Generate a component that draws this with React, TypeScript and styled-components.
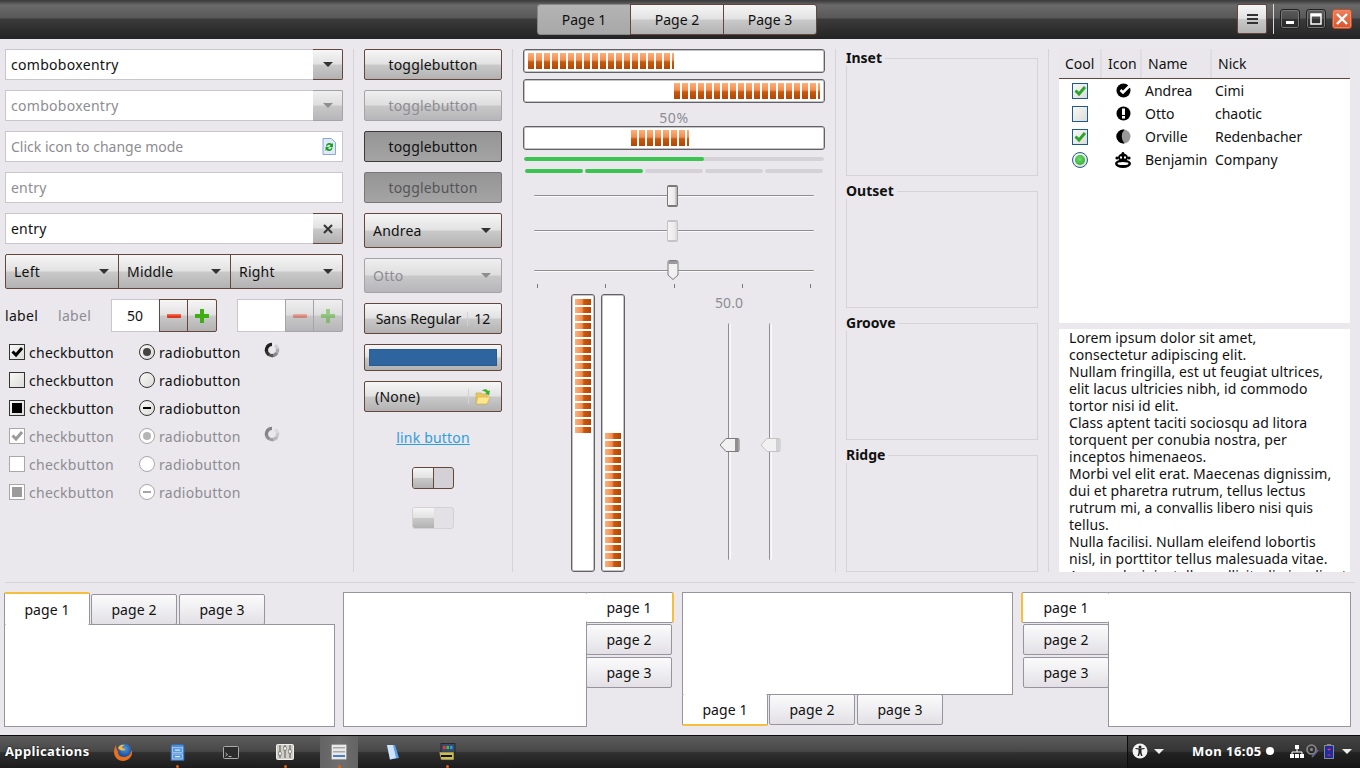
import React from "react";
import styled, { createGlobalStyle, css } from "styled-components";

const GlobalStyle = createGlobalStyle`
  html, body {
    margin: 0;
    padding: 0;
    width: 1360px;
    height: 768px;
    overflow: hidden;
    background: #eae8ed;
    font-family: "Noto Sans", "Open Sans", sans-serif;
    font-size: 14px;
    color: #111;
  }
  * { box-sizing: border-box; }
`;

const buttonFace = css`
  background: linear-gradient(#f6f6f6 0%, #e2e2e2 48%, #c9c9c9 52%, #b2b2b2 100%);
`;
const disabledFace = css`
  background: linear-gradient(#efeff0 0%, #dededf 48%, #c8c8c9 52%, #b6b6b8 100%);
`;
const BROWN = "#66453a";
const MUTED = "#8e8c92";

const Root = styled.div`
  width: 1360px;
  height: 768px;
  display: flex;
  flex-direction: column;
`;

/* title bar */
const TitleBar = styled.header`
  height: 39px;
  flex: none;
  display: flex;
  align-items: flex-start;
  position: relative;
  padding-top: 4px;
  background: linear-gradient(#3a3a3a 0, #4a4a4a 2px, #6a6a6a 5px, #585858 18px, #3b3b3b 19px, #232323 100%);
`;
const Stack = styled.div`
  display: flex;
  margin-left: 537px;
  width: 280px;
  height: 31px;
`;
const StackButton = styled.div<{ $on?: boolean }>`
  flex: 1;
  display: flex;
  align-items: center;
  justify-content: center;
  border: 1px solid ${BROWN};
  margin-left: -1px;
  ${buttonFace}
  &:first-child { margin-left: 0; border-radius: 3px 0 0 3px; }
  &:last-child { border-radius: 0 3px 3px 0; }
  ${(p) => p.$on && css`background: linear-gradient(#b4b4b4, #a8a8a8); border-color: #888;`}
`;
const MenuButton = styled.div`
  margin-left: 420px;
  width: 30px;
  height: 30px;
  border: 1px solid ${BROWN};
  border-radius: 2px;
  display: flex;
  align-items: center;
  justify-content: center;
  ${buttonFace}
`;
const TitleSep = styled.div`
  width: 1px;
  height: 30px;
  margin: 0 6px 0 6px;
  background: #d8d8d8;
`;
const WinButton = styled.div<{ $close?: boolean }>`
  width: 20px;
  height: 20px;
  margin: 5px 6px 0 0;
  border-radius: 3px;
  border: 1px solid ${(p) => (p.$close ? "#b5512f" : "#222")};
  box-shadow: inset 0 0 0 1px ${(p) => (p.$close ? "#e98a68" : "#777")};
  background: ${(p) =>
    p.$close
      ? "linear-gradient(#f0805a, #d9532c)"
      : "linear-gradient(#5c5c5c, #4a4a4a 50%, #333 52%, #2a2a2a)"};
  display: flex;
  align-items: center;
  justify-content: center;
`;

/* main area */
const Main = styled.main`
  flex: none;
  height: 543px;
  padding: 10px 10px 0 5px;
  display: flex;
`;
const Sep = styled.div`
  width: 1px;
  margin: 0 10px;
  height: 523px;
  background: #d5d3d8;
`;
const Col = styled.div<{ $w: number }>`
  width: ${(p) => p.$w}px;
  flex: none;
  display: flex;
  flex-direction: column;
`;

const EntryBox = styled.div<{ $off?: boolean; $mt?: number }>`
  height: 31px;
  flex: none;
  margin-top: ${(p) => p.$mt ?? 10}px;
  display: flex;
  align-items: stretch;
  background: #fff;
  border: 1px solid #c9c7cd;
  color: ${(p) => (p.$off ? MUTED : "#111")};
  position: relative;
`;
const EntryText = styled.div<{ $ls?: number }>`
  flex: 1;
  padding-left: 5px;
  line-height: 30px;
  letter-spacing: ${(p) => p.$ls ?? 0}px;
`;
const EntryBtn = styled.div<{ $off?: boolean }>`
  width: 30px;
  margin: -1px -1px -1px 0;
  display: flex;
  align-items: center;
  justify-content: center;
  border: 1px solid ${(p) => (p.$off ? "#a5a3aa" : BROWN)};
  border-left: none;
  border-radius: 0 2px 2px 0;
  ${(p) => (p.$off ? disabledFace : buttonFace)}
`;
const EntryIcon = styled.div`
  display: flex;
  align-items: center;
  padding-right: 6px;
`;
const Arrow = styled.span<{ $off?: boolean }>`
  display: inline-block;
  width: 0;
  height: 0;
  border-left: 5px solid transparent;
  border-right: 5px solid transparent;
  border-top: 5px solid ${(p) => (p.$off ? "#8e8e8e" : "#333")};
`;
const Linked = styled.div`
  height: 35px;
  margin-top: 10px;
  flex: none;
  display: flex;
  border: 1px solid ${BROWN};
  border-radius: 2px;
  ${buttonFace}
`;
const LinkedItem = styled.div`
  width: 112px;
  flex: none;
  display: flex;
  align-items: center;
  justify-content: space-between;
  padding: 0 9px 0 8px;
  letter-spacing: 0.2px;
  border-left: 1px solid ${BROWN};
  &:first-child { border-left: none; }
`;
const SpinRow = styled.div`
  margin-top: 10px;
  height: 33px;
  flex: none;
  display: flex;
  align-items: stretch;
`;
const Lbl = styled.div<{ $off?: boolean; $w: number }>`
  width: ${(p) => p.$w}px;
  line-height: 33px;
  letter-spacing: 0.3px;
  color: ${(p) => (p.$off ? MUTED : "#111")};
`;
const Spin = styled.div<{ $ml?: number }>`
  width: 106px;
  margin-left: ${(p) => p.$ml ?? 0}px;
  display: flex;
`;
const SpinEntry = styled.div`
  flex: 1;
  background: #fff;
  border: 1px solid #c9c7cd;
  border-right: none;
  text-align: center;
  line-height: 31px;
  padding-right: 2px;
`;
const SpinBtn = styled.div<{ $off?: boolean; $w: number }>`
  width: ${(p) => p.$w}px;
  display: flex;
  align-items: center;
  justify-content: center;
  border: 1px solid ${(p) => (p.$off ? "#a5a3aa" : BROWN)};
  margin-left: -1px;
  &:last-child { border-radius: 0 2px 2px 0; }
  ${(p) => (p.$off ? disabledFace : buttonFace)}
`;
const ChecksGrid = styled.div`
  margin-top: 6px;
  padding-left: 4px;
  display: grid;
  grid-template-columns: 130px 125px 1fr;
  grid-auto-rows: 28px;
  align-items: center;
`;
const CheckItem = styled.div<{ $off?: boolean }>`
  display: flex;
  align-items: center;
  gap: 4px;
  letter-spacing: 0.28px;
  color: ${(p) => (p.$off ? MUTED : "#111")};
`;
const Box = styled.span<{ $off?: boolean }>`
  width: 16px;
  height: 16px;
  flex: none;
  border: 1px solid ${(p) => (p.$off ? "#a9a7ac" : "#333")};
  background: ${(p) => (p.$off ? "#fff" : "linear-gradient(135deg, #f8f8f6, #dcdcd8)")};
  display: flex;
  align-items: center;
  justify-content: center;
`;
const Radio = styled(Box)`
  border-radius: 50%;
`;
const BoxFill = styled.span<{ $off?: boolean }>`
  width: 10px;
  height: 10px;
  background: ${(p) => (p.$off ? "#9b9b9b" : "#000")};
`;
const RadioDot = styled.span<{ $off?: boolean }>`
  width: 8px;
  height: 8px;
  border-radius: 50%;
  background: ${(p) => (p.$off ? "#b5b5b5" : "#444")};
`;
const RadioDash = styled.span<{ $off?: boolean }>`
  width: 8px;
  height: 2px;
  background: ${(p) => (p.$off ? "#a5a5a5" : "#000")};
`;

/* second column */
const Btn = styled.div<{ $h?: number; $mt?: number; $off?: boolean; $dark?: boolean; $sb?: boolean }>`
  height: ${(p) => p.$h ?? 31}px;
  margin-top: ${(p) => p.$mt ?? 10}px;
  flex: none;
  display: flex;
  align-items: center;
  justify-content: ${(p) => (p.$sb ? "space-between" : "center")};
  padding: ${(p) => (p.$sb ? "0 10px 0 8px" : "0")};
  border: 1px solid ${(p) => (p.$off ? "#a5a3aa" : BROWN)};
  border-radius: 2px;
  letter-spacing: 0.2px;
  color: ${(p) => (p.$off ? MUTED : "#111")};
  ${(p) => (p.$off ? disabledFace : buttonFace)}
  ${(p) =>
    p.$dark &&
    css`
      background: linear-gradient(#959595, #a4a4a4);
      border-color: ${p.$off ? "#77767a" : "#3c3c3c"};
      color: ${p.$off ? "#555" : "#111"};
    `}
`;
const FontName = styled.span`
  letter-spacing: 0;
`;
const FontSize = styled.span`
  margin-left: 6px;
  padding-left: 6px;
  border-left: 1px solid #d2d2d2;
  letter-spacing: 0;
  line-height: 14px;
`;
const ColorFill = styled.div`
  width: 100%;
  height: 17px;
  margin: 0 4px;
  background: #2f659f;
  border: 1px solid #2a5a8e;
`;
const FileLabel = styled.span`
  flex: 1;
  padding-left: 2px;
`;
const FileDivider = styled.span`
  height: 15px;
  width: 1px;
  margin-right: 6px;
  background: #d2d2d2;
`;
const LinkBtn = styled.div`
  margin-top: 16px;
  text-align: center;
  color: #2f9ddb;
  text-decoration: underline;
  line-height: 19px;
  letter-spacing: 0.2px;
`;
const SwitchBox = styled.div<{ $off?: boolean; $mt: number }>`
  width: 42px;
  height: 22px;
  margin: ${(p) => p.$mt}px auto 0;
  display: flex;
  border: 1px solid ${(p) => (p.$off ? "#d3d1d6" : BROWN)};
  border-radius: 3px;
  background: ${(p) => (p.$off ? "#e3e1e6" : "#d3d1d6")};
  overflow: hidden;
`;
const SwitchKnob = styled.div<{ $off?: boolean }>`
  width: 21px;
  border-right: 1px solid ${(p) => (p.$off ? "transparent" : BROWN)};
  ${buttonFace}
`;

/* third column */
const ProgressBar = styled.div<{ $mt?: number }>`
  height: 24px;
  flex: none;
  margin-top: ${(p) => p.$mt ?? 6}px;
  padding: 3px;
  border: 1px solid #626165;
  border-radius: 3px;
  background: #fff;
  box-shadow: inset 0 0 0 1px #c4c3c6;
`;
const ProgressFill = styled.div<{ $left: number; $w: number }>`
  height: 16px;
  margin-left: ${(p) => p.$left}px;
  width: ${(p) => p.$w}px;
  background: repeating-linear-gradient(90deg, transparent 0 6px, #fff 6px 8px),
    linear-gradient(#ffb07a 0%, #f08c4e 45%, #c9590f 55%, #b24803 100%);
`;
const Pct = styled.div`
  height: 23px;
  flex: none;
  text-align: center;
  line-height: 30px;
  letter-spacing: 0.6px;
  color: ${MUTED};
`;
const GreenTrough = styled.div`
  margin: 7px 1px 0;
  height: 4px;
  flex: none;
  background: #d4d2d7;
  border-radius: 2px;
  overflow: hidden;
`;
const GreenFill = styled.div<{ $w: number }>`
  height: 4px;
  width: ${(p) => p.$w}px;
  background: #3cc451;
  border-radius: 2px;
`;
const Level = styled.div`
  margin: 8px 2px 0;
  flex: none;
  display: flex;
  gap: 2px;
`;
const LevelSeg = styled.div<{ $on?: boolean }>`
  flex: 1;
  height: 4px;
  border-radius: 2px;
  background: ${(p) => (p.$on ? "#3cc451" : "#d4d2d7")};
`;
const HSlider = styled.div<{ $mt: number }>`
  position: relative;
  width: 280px;
  height: 22px;
  margin: ${(p) => p.$mt}px 0 0 11px;
  flex: none;
`;
const HTrack = styled.div`
  position: absolute;
  left: 0;
  right: 0;
  top: 10px;
  height: 2px;
  border-top: 1px solid #8e8d90;
  border-bottom: 1px solid #fafafa;
  border-radius: 2px;
`;
const Handle = styled.div<{ $off?: boolean }>`
  position: absolute;
  left: 133px;
  top: 0;
  width: 11px;
  height: 22px;
  border: 1px solid ${(p) => (p.$off ? "#c4c3c6" : "#7a797c")};
  border-top-width: 2px;
  border-bottom-width: 2px;
  border-radius: 2px;
  background: linear-gradient(90deg, #f4f4f4, #ececec 70%, ${(p) => (p.$off ? "#d8d8d8" : "#aaa")});
`;
const HandleSvg = styled.svg<{ $l: number; $t: number }>`
  position: absolute;
  left: ${(p) => p.$l}px;
  top: ${(p) => p.$t}px;
`;
const Ticks = styled.div`
  margin: 2px 0 0 14px;
  width: 274px;
  height: 4px;
  flex: none;
  display: flex;
  justify-content: space-between;
`;
const Tick = styled.span`
  width: 1px;
  height: 4px;
  background: #77767a;
`;
const VArea = styled.div`
  margin-top: 6px;
  flex: none;
  height: 278px;
  display: flex;
  padding-left: 48px;
`;
const VBar = styled.div<{ $ml?: number; $top: number }>`
  width: 24px;
  margin-left: ${(p) => p.$ml ?? 0}px;
  padding: ${(p) => p.$top}px 3px 0 3px;
  border: 1px solid #626165;
  border-radius: 3px;
  background: #fff;
  box-shadow: inset 0 0 0 1px #c4c3c6;
`;
const VFill = styled.div`
  height: 134px;
  width: 16px;
  background: repeating-linear-gradient(180deg, transparent 0 6px, #fff 6px 8px),
    linear-gradient(90deg, #ffb07a 0%, #f08c4e 45%, #c9590f 55%, #b24803 100%);
`;
const VCol = styled.div<{ $ml: number; $pt?: number }>`
  width: 40px;
  margin-left: ${(p) => p.$ml}px;
  padding-top: ${(p) => p.$pt ?? 0}px;
  display: flex;
  flex-direction: column;
  align-items: center;
`;
const VValue = styled.div`
  height: 29px;
  line-height: 18px;
  color: ${MUTED};
`;
const VTrack = styled.div`
  position: relative;
  width: 3px;
  height: 237px;
  border-left: 1px solid #8e8d90;
  border-right: 1px solid #fafafa;
  background: #f2f1f3;
  border-radius: 2px;
`;

/* frames */
const Frame = styled.div<{ $h: number; $mt: number }>`
  position: relative;
  height: ${(p) => p.$h}px;
  margin-top: ${(p) => p.$mt}px;
  border: 1px solid #d5d3d8;
  flex: none;
`;
const FrameLabel = styled.span`
  position: absolute;
  left: -1px;
  top: -10px;
  padding-right: 3px;
  line-height: 17px;
  font-weight: 700;
  background: #eae8ed;
`;

/* tree */
const Tree = styled.div`
  height: 274px;
  flex: none;
  background: #fff;
`;
const TreeHead = styled.div`
  height: 30px;
  display: flex;
  background: #e9e7ec;
  border-bottom: 1px solid ${BROWN};
`;
const TreeHeadCell = styled.div<{ $w: number }>`
  width: ${(p) => p.$w}px;
  flex: none;
  padding-left: 6px;
  line-height: 30px;
  border-right: 2px solid #dfdde2;
  &:last-child { flex: 1; border-right: none; }
`;
const TreeRow = styled.div`
  height: 23px;
  display: flex;
  align-items: center;
`;
const CellCenter = styled.div<{ $w: number }>`
  width: ${(p) => p.$w}px;
  flex: none;
  display: flex;
  justify-content: center;
`;
const CellText = styled.div<{ $w: number }>`
  width: ${(p) => p.$w}px;
  flex: none;
  white-space: nowrap;
`;
const TreeCheck = styled.span<{ $radio?: boolean }>`
  width: 16px;
  height: 16px;
  border: 1px solid #1f5a8c;
  border-radius: ${(p) => (p.$radio ? "50%" : "0")};
  background: linear-gradient(135deg, #f8f8f6, #dcdcd8);
  display: flex;
  align-items: center;
  justify-content: center;
`;
const TreeDot = styled.span`
  width: 10px;
  height: 10px;
  border-radius: 50%;
  background: radial-gradient(circle at 45% 40%, #6fdc6a, #23a02a);
`;
const TextView = styled.div`
  margin-top: 6px;
  height: 243px;
  flex: none;
  overflow: hidden;
  padding-left: 10px;
  background: #fff;
  line-height: 17px;
  letter-spacing: 0.07px;
`;
const TextLine = styled.div`
  white-space: nowrap;
`;

const Divider = styled.div`
  margin: 0 5px;
  height: 1px;
  flex: none;
  background: #d5d3d8;
`;

/* notebooks */
const Notebooks = styled.section`
  flex: none;
  height: 152px;
  padding: 9px 9px 0 4px;
  display: flex;
  gap: 8px;
`;
const Notebook = styled.div<{ $dir: "top" | "right" | "bottom" | "left" }>`
  width: ${(p) => (p.$dir === "left" ? 330 : 331)}px;
  height: ${(p) => (p.$dir === "bottom" ? 134 : 135)}px;
  flex: none;
  display: flex;
  flex-direction: ${(p) =>
    ({ top: "column", right: "row-reverse", bottom: "column-reverse", left: "row" })[p.$dir]};
`;
const Panel = styled.div<{ $dir: string }>`
  flex: 1;
  background: #fff;
  border: 1px solid #98949f;
  ${(p) => p.$dir === "top" && "margin-top: -1px;"}
  ${(p) => p.$dir === "bottom" && "margin-bottom: -1px;"}
  ${(p) => p.$dir === "left" && "margin-left: -1px;"}
  ${(p) => p.$dir === "right" && "margin-right: -1px;"}
`;
const TabStrip = styled.div<{ $dir: string }>`
  display: flex;
  flex: none;
  flex-direction: ${(p) => (p.$dir === "top" || p.$dir === "bottom" ? "row" : "column")};
  gap: 2px;
  position: relative;
  z-index: 1;
  align-items: ${(p) => (p.$dir === "top" ? "flex-end" : "flex-start")};
`;
const Tab = styled.div<{ $active?: boolean; $dir: string }>`
  width: 86px;
  height: 31px;
  display: flex;
  align-items: center;
  justify-content: center;
  border: 1px solid #98949f;
  border-radius: 2px;
  letter-spacing: 0.1px;
  background: linear-gradient(#fbfbfb, #e2e0e5);
  ${(p) => p.$dir === "left" && "margin-left: 2px;"}
  ${(p) => p.$dir === "right" && "margin-right: 2px;"}
  ${(p) =>
    p.$active &&
    css`
      background: #fff;
      ${p.$dir === "top" && "height: 33px; margin-right: -1px; border-top: 2px solid #f5bf3c; border-bottom: none;"}
      ${p.$dir === "bottom" && "height: 32px; margin-right: -1px; border-bottom: 2px solid #f5bf3c; border-top: none;"}
      ${p.$dir === "left" && "width: 88px; margin-left: 0; margin-bottom: -1px; border-left: 2px solid #f5bf3c; border-right: none;"}
      ${p.$dir === "right" && "width: 88px; margin-right: 0; margin-bottom: -1px; border-right: 2px solid #f5bf3c; border-left: none;"}
    `}
`;

/* panel */
const Taskbar = styled.footer`
  flex: none;
  height: 33px;
  position: relative;
  display: flex;
  align-items: center;
  border-top: 1px solid #0c0c0c;
  background: linear-gradient(#5d5d5d 0, #474747 48%, #303030 52%, #1c1c1c 100%);
  color: #fff;
  font-weight: 700;
  font-size: 13px;
`;
const AppMenu = styled.div`
  width: 96px;
  padding-left: 5px;
  margin-bottom: 3px;
  flex: none;
  letter-spacing: 0.35px;
  text-shadow: 0 0 2px #000;
`;
const TaskIcon = styled.div<{ $active?: boolean; $dot?: boolean }>`
  position: relative;
  width: 54px;
  flex: none;
  height: 32px;
  display: flex;
  align-items: center;
  justify-content: center;
  ${(p) =>
    p.$active &&
    css`
      background: linear-gradient(90deg, #646464, #6e6e6e, #646464);
      margin: 0 8px;
      width: 38px;
    `}
  ${(p) =>
    p.$dot &&
    css`
      &::after {
        content: "";
        position: absolute;
        left: 50%;
        bottom: 0;
        width: 3px;
        height: 3px;
        margin-left: -1px;
        border-radius: 50%;
        background: #e0641c;
      }
    `}
`;
const Tray = styled.div`
  margin-left: auto;
  display: flex;
  align-items: center;
  height: 32px;
  width: 233px;
  border-left: 1px solid #0c0c0c;
  padding: 0 0 2px 4px;
  background: linear-gradient(#444 0, #343434 48%, #222 52%, #141414 100%);
`;
const Clock = styled.span`
  margin: 0 4px 1px 28px;
  white-space: nowrap;
  letter-spacing: 0.45px;
`;
const TrayIcons = styled.div`
  display: flex;
  align-items: center;
  gap: 2px;
  margin-left: 16px;
`;
const WhiteArrow = styled.span<{ $ml: number }>`
  margin-left: ${(p) => p.$ml}px;
  width: 0;
  height: 0;
  border-left: 5px solid transparent;
  border-right: 5px solid transparent;
  border-top: 5px solid #eee;
`;
const Dot = styled.span`
  width: 8px;
  height: 8px;
  margin-bottom: 1px;
  border-radius: 50%;
  background: #fff;
`;

const CheckMark: React.FC<{ color?: string }> = ({ color = "#000" }) => (
  <svg width="14" height="14" viewBox="0 0 14 14">
    <path d="M2.500 6.500 L6 10 L12 3" fill="none" stroke={color} strokeWidth="3" />
  </svg>
);

const Spinner: React.FC<{ off?: boolean }> = ({ off }) => (
  <svg width="16" height="16" viewBox="0 0 16 16" style={{ opacity: off ? 0.5 : 1 }}>
    {["#222", "#222", "#333", "#555", "#888", "#aaa", "#ccc"].map((shade, i) => {
      const a = -Math.PI / 2 - (i * Math.PI) / 4;
      const b = a - Math.PI / 4 - 0.2;
      const r = 5.6;
      const p = (t: number) => `${8 + r * Math.cos(t)} ${8 + r * Math.sin(t)}`;
      return <path key={i} d={`M${p(a)} A${r} ${r} 0 0 0 ${p(b)}`} stroke={shade} strokeWidth="3.200" fill="none" />;
    }).reverse()}
  </svg>
);

const MinusIcon: React.FC<{ off?: boolean }> = ({ off }) => (
  <svg width="16" height="16" viewBox="0 0 16 16" style={{ opacity: off ? 0.45 : 1 }}>
    <rect x="1" y="6" width="14" height="4" rx="1" fill="#e0341c" />
    <rect x="1" y="6" width="14" height="1.500" fill="#f06a50" />
  </svg>
);
const PlusIcon: React.FC<{ off?: boolean }> = ({ off }) => (
  <svg width="16" height="16" viewBox="0 0 16 16" style={{ opacity: off ? 0.45 : 1 }}>
    <path d="M6 1h4v5h5v4h-5v5H6v-5H1V6h5z" fill="#3fae14" />
  </svg>
);

const RefreshDoc = () => (
  <svg width="14" height="17" viewBox="0 0 14 17">
    <path d="M1 .5h8.500l4 4v12H1z" fill="#dfe9f8" stroke="#8aa6d8" />
    <path d="M4 8a3.500 3.500 0 0 1 6-2l1-1v4H7l1.500-1.500A2 2 0 0 0 5 9z" fill="#1da21d" />
    <path d="M10.500 10a3.500 3.500 0 0 1-6 2l-1 1V9h4L6 10.500A2 2 0 0 0 9.500 9z" fill="#1da21d" />
  </svg>
);

const FolderOpen = () => (
  <svg width="16" height="17" viewBox="0 0 16 17">
    <path d="M1 5h5l1 1h5v10H1z" fill="#e9c85c" stroke="#c8a544" strokeWidth=".6" />
    <path d="M1 16l2-7h12l-3 7z" fill="#fbe58f" stroke="#d0ae4a" strokeWidth=".6" />
    <path d="M7 3c2-2.500 5-2 6 0l2-.5-1 5-4-2.500 1.500-.5C10.500 3.500 9 3 7 3z" fill="#3fae2a" />
  </svg>
);

const StatusCheck = () => (
  <svg width="15" height="15" viewBox="0 0 15 15">
    <circle cx="7.500" cy="7.500" r="7" fill="#000" />
    <path d="M4.500 7l2.500 2.500L14 2.500" stroke="#fff" strokeWidth="2.600" fill="none" />
  </svg>
);
const StatusWarn = () => (
  <svg width="15" height="15" viewBox="0 0 15 15">
    <circle cx="7.500" cy="7.500" r="7" fill="#000" />
    <rect x="6" y="2.500" width="3" height="6.500" fill="#fff" />
    <rect x="6" y="10" width="3" height="2.500" fill="#fff" />
  </svg>
);
const StatusMoon = () => (
  <svg width="15" height="15" viewBox="0 0 15 15">
    <circle cx="7.500" cy="7.500" r="7" fill="#999" />
    <path d="M8.500 .6A7 7 0 1 0 8.500 14.400A10 10 0 0 1 8.500 .6z" fill="#000" />
  </svg>
);
const Monkey = () => (
  <svg width="18" height="16" viewBox="0 0 18 16">
    <circle cx="9" cy="1.300" r="1.300" fill="#000" />
    <ellipse cx="9" cy="5.500" rx="5" ry="4" fill="#000" />
    <circle cx="3" cy="6" r="1.600" fill="#000" />
    <circle cx="15" cy="6" r="1.600" fill="#000" />
    <rect x="6" y="4.500" width="2" height="2" fill="#fff" />
    <rect x="10" y="4.500" width="2" height="2" fill="#fff" />
    <ellipse cx="9" cy="11.800" rx="8" ry="4.200" fill="#000" />
    <ellipse cx="9" cy="11.500" rx="5.500" ry="1.500" fill="#fff" />
  </svg>
);

const Firefox = () => (
  <svg width="20" height="20" viewBox="0 0 20 20">
    <defs>
      <radialGradient id="ffb" cx="55%" cy="35%" r="50%">
        <stop offset="0" stopColor="#4f9be0" />
        <stop offset="1" stopColor="#1d4f9c" />
      </radialGradient>
    </defs>
    <circle cx="11" cy="9" r="7.500" fill="url(#ffb)" />
    <path d="M3 3c-1 2-2 4-2 7 0 5 4 9 9 9s9-4 9-8c0-1 0-2-.5-3-1 5-4 7-8 7-4 0-6-3-5.500-6C4 8 3 6 3 3z" fill="#e8701a" />
    <path d="M5 6c1-3 4-4 7-3-2 .5-3 2-3 3 2 0 3 1 3 2-2 1-5 1-7-2z" fill="#f6b73c" />
  </svg>
);
const Cabinet = () => (
  <svg width="15" height="17" viewBox="0 0 15 17">
    <path d="M1 2l1-1.500h11L14 2v14.500H1z" fill="#4f8fd8" stroke="#2f67aa" strokeWidth=".7" />
    <rect x="2.500" y="3.500" width="10" height="5" fill="#5b9ae0" stroke="#cfe2f6" strokeWidth=".6" />
    <rect x="2.500" y="10" width="10" height="5" fill="#5b9ae0" stroke="#cfe2f6" strokeWidth=".6" />
    <rect x="5" y="5.500" width="5" height="1.200" fill="#dfeaf6" />
    <rect x="5" y="12" width="5" height="1.200" fill="#dfeaf6" />
  </svg>
);
const Terminal = () => (
  <svg width="16" height="13" viewBox="0 0 16 13">
    <rect x=".5" y=".5" width="15" height="12" rx="1" fill="#2c2c2c" stroke="#aaa" />
    <path d="M2.500 7l2 1.500-2 1.500M5.500 10.500h3" stroke="#ddd" strokeWidth=".8" fill="none" />
  </svg>
);
const Mixer = () => (
  <svg width="18" height="16" viewBox="0 0 18 16">
    <rect x=".5" y=".5" width="17" height="15" rx="1" fill="#d2d0c6" stroke="#eee" />
    {[4, 9, 14].map((x, i) => (
      <g key={x}>
        <rect x={x - 0.5} y="1" width="1" height="13" fill="#555" />
        <rect x={x - 1.5} y={[8, 3, 6][i]} width="3" height="3" fill="#f2f2f2" stroke="#444" strokeWidth=".4" />
      </g>
    ))}
  </svg>
);
const ListDoc = () => (
  <svg width="16" height="16" viewBox="0 0 16 16">
    <rect x=".5" y=".5" width="15" height="15" rx="1" fill="#e9e9e9" stroke="#9a9a9a" />
    <rect x="2" y="3" width="12" height="1.500" fill="#a9a9a9" />
    <rect x="2" y="7" width="12" height="1.500" fill="#a9a9a9" />
    <rect x="2" y="11" width="12" height="2" fill="#4a7fc0" />
  </svg>
);
const Note = () => (
  <svg width="14" height="16" viewBox="0 0 14 16">
    <path d="M1 1h8l4 13-9 1.500z" fill="#5d9fe8" />
    <path d="M1 1h6l3 13-6 1.500z" fill="#cfe3fb" />
  </svg>
);
const Display = () => (
  <svg width="18" height="18" viewBox="0 0 18 18">
    <rect x="3" y=".5" width="14" height="10" fill="#3a4a6a" stroke="#111" strokeWidth=".6" />
    <rect x="5" y="3" width="2.500" height="3" fill="#e33" />
    <rect x="8.500" y="3" width="2.500" height="3" fill="#3c3" />
    <rect x="12" y="3" width="2.500" height="3" fill="#39e" />
    <path d="M1 9h15v8H3z" fill="#c9bd5a" stroke="#333" strokeWidth=".6" />
    <rect x="3" y="12" width="11" height="2" fill="#111" />
  </svg>
);
const Accessibility = () => (
  <svg width="16" height="16" viewBox="0 0 16 16">
    <circle cx="8" cy="8" r="7.500" fill="#f2f2f2" />
    <circle cx="8" cy="4" r="1.500" fill="#222" />
    <path d="M3.500 6l3 .5v3L5.500 13H7l1-3 1 3h1.500l-1-3.500v-3l3-.5V5l-4.500.5L3.500 5z" fill="#222" />
  </svg>
);
const Network = () => (
  <svg width="14" height="13" viewBox="0 0 14 13">
    <rect x="5" y="0" width="4" height="4" fill="#fff" />
    <path d="M7 4v3M2 9V7h10v2" stroke="#fff" fill="none" />
    <rect x="0" y="9" width="4" height="4" fill="#fff" />
    <rect x="5" y="9" width="4" height="4" fill="#fff" />
    <rect x="10" y="9" width="4" height="4" fill="#fff" />
  </svg>
);
const Speakerish = () => (
  <svg width="16" height="14" viewBox="0 0 16 14">
    <circle cx="5.500" cy="5.500" r="4.500" fill="none" stroke="#8a8a8a" strokeWidth="1.600" />
    <circle cx="5.500" cy="5.500" r="1.500" fill="#8a8a8a" />
    <path d="M6 13l6-7" stroke="#6a6a9a" strokeWidth="1.800" />
  </svg>
);
const Battery = () => (
  <svg width="10" height="15" viewBox="0 0 10 15">
    <rect x="3" y="0" width="4" height="2" fill="#888" />
    <rect x=".5" y="1.500" width="9" height="13" fill="#1c2ca8" stroke="#888" />
    <path d="M5 4v3M3.500 5.500h3M3.500 11h3" stroke="#e33" />
  </svg>
);

const LINES = [
  "Lorem ipsum dolor sit amet,",
  "consectetur adipiscing elit.",
  "Nullam fringilla, est ut feugiat ultrices,",
  "elit lacus ultricies nibh, id commodo",
  "tortor nisi id elit.",
  "Class aptent taciti sociosqu ad litora",
  "torquent per conubia nostra, per",
  "inceptos himenaeos.",
  "Morbi vel elit erat. Maecenas dignissim,",
  "dui et pharetra rutrum, tellus lectus",
  "rutrum mi, a convallis libero nisi quis",
  "tellus.",
  "Nulla facilisi. Nullam eleifend lobortis",
  "nisl, in porttitor tellus malesuada vitae.",
  "Aenean lacinia, tellus sollicitudin iaculis ut",
];

const TREE = [
  { mark: "check", icon: <StatusCheck />, name: "Andrea", nick: "Cimi" },
  { mark: "none", icon: <StatusWarn />, name: "Otto", nick: "chaotic" },
  { mark: "check", icon: <StatusMoon />, name: "Orville", nick: "Redenbacher" },
  { mark: "radio", icon: <Monkey />, name: "Benjamin", nick: "Company" },
];

const CHECK_ROWS: { state: "on" | "none" | "mixed"; off: boolean }[] = [
  { state: "on", off: false },
  { state: "none", off: false },
  { state: "mixed", off: false },
  { state: "on", off: true },
  { state: "none", off: true },
  { state: "mixed", off: true },
];

const Tabs: React.FC<{ dir: "top" | "right" | "bottom" | "left" }> = ({ dir }) => (
  <Notebook $dir={dir}>
    <TabStrip $dir={dir}>
      <Tab $dir={dir} $active>page 1</Tab>
      <Tab $dir={dir}>page 2</Tab>
      <Tab $dir={dir}>page 3</Tab>
    </TabStrip>
    <Panel $dir={dir} />
  </Notebook>
);

export default function App() {
  return (
    <Root>
      <GlobalStyle />
      <TitleBar>
        <Stack>
          <StackButton $on>Page 1</StackButton>
          <StackButton>Page 2</StackButton>
          <StackButton>Page 3</StackButton>
        </Stack>
        <MenuButton>
          <svg width="11" height="10" viewBox="0 0 11 10">
            <rect y="0" width="11" height="2" fill="#333" />
            <rect y="4" width="11" height="2" fill="#333" />
            <rect y="8" width="11" height="2" fill="#333" />
          </svg>
        </MenuButton>
        <TitleSep />
        <WinButton>
          <svg width="12" height="12" viewBox="0 0 12 12">
            <rect x="2" y="8" width="8" height="3" fill="#fff" />
          </svg>
        </WinButton>
        <WinButton>
          <svg width="12" height="12" viewBox="0 0 12 12">
            <rect x="1" y="1" width="10" height="10" fill="none" stroke="#fff" strokeWidth="1.500" />
            <rect x="1" y="1" width="10" height="2.500" fill="#fff" />
          </svg>
        </WinButton>
        <WinButton $close>
          <svg width="14" height="14" viewBox="0 0 14 14">
            <path d="M2 2l10 10M12 2L2 12" stroke="#fff" strokeWidth="2.400" />
          </svg>
        </WinButton>
      </TitleBar>

      <Main>
        <Col $w={338}>
          <EntryBox $mt={0}>
            <EntryText $ls={0.3}>comboboxentry</EntryText>
            <EntryBtn><Arrow /></EntryBtn>
          </EntryBox>
          <EntryBox $off>
            <EntryText $ls={0.3}>comboboxentry</EntryText>
            <EntryBtn $off><Arrow $off /></EntryBtn>
          </EntryBox>
          <EntryBox $off>
            <EntryText>Click icon to change mode</EntryText>
            <EntryIcon><RefreshDoc /></EntryIcon>
          </EntryBox>
          <EntryBox $off>
            <EntryText $ls={0.2}>entry</EntryText>
          </EntryBox>
          <EntryBox>
            <EntryText $ls={0.2}>entry</EntryText>
            <EntryBtn>
              <svg width="10" height="10" viewBox="0 0 10 10">
                <path d="M1 1l8 8M9 1L1 9" stroke="#333" strokeWidth="2" />
              </svg>
            </EntryBtn>
          </EntryBox>
          <Linked>
            <LinkedItem>Left <Arrow /></LinkedItem>
            <LinkedItem>Middle <Arrow /></LinkedItem>
            <LinkedItem>Right <Arrow /></LinkedItem>
          </Linked>
          <SpinRow>
            <Lbl $w={53}>label</Lbl>
            <Lbl $w={53} $off>label</Lbl>
            <Spin>
              <SpinEntry>50</SpinEntry>
              <SpinBtn $w={29}><MinusIcon /></SpinBtn>
              <SpinBtn $w={30}><PlusIcon /></SpinBtn>
            </Spin>
            <Spin $ml={20}>
              <SpinEntry />
              <SpinBtn $w={29} $off><MinusIcon off /></SpinBtn>
              <SpinBtn $w={30} $off><PlusIcon off /></SpinBtn>
            </Spin>
          </SpinRow>
          <ChecksGrid>
            {CHECK_ROWS.map((r, i) => (
              <React.Fragment key={i}>
                <CheckItem $off={r.off}>
                  <Box $off={r.off}>
                    {r.state === "on" && <CheckMark color={r.off ? "#9b9b9b" : "#000"} />}
                    {r.state === "mixed" && <BoxFill $off={r.off} />}
                  </Box>
                  checkbutton
                </CheckItem>
                <CheckItem $off={r.off}>
                  <Radio $off={r.off}>
                    {r.state === "on" && <RadioDot $off={r.off} />}
                    {r.state === "mixed" && <RadioDash $off={r.off} />}
                  </Radio>
                  radiobutton
                </CheckItem>
                <div>{i === 0 && <Spinner />}{i === 3 && <Spinner off />}</div>
              </React.Fragment>
            ))}
          </ChecksGrid>
        </Col>
        <Sep />
        <Col $w={138}>
          <Btn $mt={0}>togglebutton</Btn>
          <Btn $off>togglebutton</Btn>
          <Btn $dark>togglebutton</Btn>
          <Btn $dark $off>togglebutton</Btn>
          <Btn $h={35} $sb>Andrea <Arrow /></Btn>
          <Btn $h={35} $off $sb>Otto <Arrow $off /></Btn>
          <Btn>
            <FontName>Sans Regular</FontName>
            <FontSize>12</FontSize>
          </Btn>
          <Btn $h={27}><ColorFill /></Btn>
          <Btn $sb>
            <FileLabel>(None)</FileLabel>
            <FileDivider />
            <FolderOpen />
          </Btn>
          <LinkBtn>link button</LinkBtn>
          <SwitchBox $mt={20}><SwitchKnob /></SwitchBox>
          <SwitchBox $mt={18} $off><SwitchKnob $off /></SwitchBox>
        </Col>
        <Sep />
        <Col $w={302}>
          <ProgressBar $mt={0}><ProgressFill $left={1} $w={146} /></ProgressBar>
          <ProgressBar><ProgressFill $left={147} $w={146} /></ProgressBar>
          <Pct>50%</Pct>
          <ProgressBar $mt={0}><ProgressFill $left={104} $w={58} /></ProgressBar>
          <GreenTrough><GreenFill $w={180} /></GreenTrough>
          <Level>
            <LevelSeg $on />
            <LevelSeg $on />
            <LevelSeg />
            <LevelSeg />
            <LevelSeg />
          </Level>
          <HSlider $mt={12}><HTrack /><Handle /></HSlider>
          <HSlider $mt={13}><HTrack /><Handle $off /></HSlider>
          <HSlider $mt={18}>
            <HTrack />
            <HandleSvg $l={133} $t={0} width="12" height="20" viewBox="0 0 12 20">
              <path d="M1 2 Q1 .5 2.500 .5 H9.500 Q11 .5 11 2 V15 L6 19.500 L1 15 Z" fill="#f1f1f1" stroke="#7a797c" />
              <rect x="1.500" y="1" width="9" height="3" fill="#9a9a9a" />
            </HandleSvg>
          </HSlider>
          <Ticks><Tick /><Tick /><Tick /><Tick /><Tick /></Ticks>
          <VArea>
            <VBar $top={4}><VFill /></VBar>
            <VBar $ml={6} $top={138}><VFill /></VBar>
            <VCol $ml={84}>
              <VValue>50.0</VValue>
              <VTrack>
                <HandleSvg $l={-10} $t={114} width="21" height="16" viewBox="0 0 21 16">
                  <path d="M1 8 L7 1.500 H19 Q20 1.500 20 3 V13 Q20 14.500 19 14.500 H7 Z" fill="#f1f1f1" stroke="#7a797c" />
                  <rect x="16" y="2" width="3.500" height="12" fill="#8f8f8f" />
                </HandleSvg>
              </VTrack>
            </VCol>
            <VCol $ml={1} $pt={29}>
              <VTrack>
                <HandleSvg $l={-10} $t={114} width="21" height="16" viewBox="0 0 21 16">
                  <path d="M1 8 L7 1.500 H19 Q20 1.500 20 3 V13 Q20 14.500 19 14.500 H7 Z" fill="#f1f1f1" stroke="#c3c2c5" />
                  <rect x="16" y="2" width="3.500" height="12" fill="#cfcfcf" />
                </HandleSvg>
              </VTrack>
            </VCol>
          </VArea>
        </Col>
        <Sep />
        <Col $w={192}>
          <Frame $h={118} $mt={9}><FrameLabel>Inset</FrameLabel></Frame>
          <Frame $h={117} $mt={15}><FrameLabel>Outset</FrameLabel></Frame>
          <Frame $h={117} $mt={15}><FrameLabel>Groove</FrameLabel></Frame>
          <Frame $h={117} $mt={15}><FrameLabel>Ridge</FrameLabel></Frame>
        </Col>
        <Sep />
        <Col $w={291}>
          <Tree>
            <TreeHead>
              <TreeHeadCell $w={43}>Cool</TreeHeadCell>
              <TreeHeadCell $w={40}>Icon</TreeHeadCell>
              <TreeHeadCell $w={70}>Name</TreeHeadCell>
              <TreeHeadCell $w={138}>Nick</TreeHeadCell>
            </TreeHead>
            <div>
              {TREE.map((row) => (
                <TreeRow key={row.name}>
                  <CellCenter $w={42}>
                    {row.mark === "radio" ? (
                      <TreeCheck $radio><TreeDot /></TreeCheck>
                    ) : (
                      <TreeCheck>{row.mark === "check" && <CheckMark color="#2ca52c" />}</TreeCheck>
                    )}
                  </CellCenter>
                  <CellCenter $w={44}>{row.icon}</CellCenter>
                  <CellText $w={70}>{row.name}</CellText>
                  <CellText $w={130}>{row.nick}</CellText>
                </TreeRow>
              ))}
            </div>
          </Tree>
          <TextView>
            {LINES.map((l) => (
              <TextLine key={l}>{l}</TextLine>
            ))}
          </TextView>
        </Col>
      </Main>

      <Divider />

      <Notebooks>
        <Tabs dir="top" />
        <Tabs dir="right" />
        <Tabs dir="bottom" />
        <Tabs dir="left" />
      </Notebooks>

      <Taskbar>
        <AppMenu>Applications</AppMenu>
        <TaskIcon><Firefox /></TaskIcon>
        <TaskIcon $dot><Cabinet /></TaskIcon>
        <TaskIcon><Terminal /></TaskIcon>
        <TaskIcon $dot><Mixer /></TaskIcon>
        <TaskIcon $active $dot><ListDoc /></TaskIcon>
        <TaskIcon><Note /></TaskIcon>
        <TaskIcon $dot><Display /></TaskIcon>
        <Tray>
          <Accessibility />
          <WhiteArrow $ml={6} />
          <Clock>Mon 16:05</Clock>
          <Dot />
          <TrayIcons>
            <Network />
            <Speakerish />
            <Battery />
          </TrayIcons>
          <WhiteArrow $ml={8} />
        </Tray>
      </Taskbar>
    </Root>
  );
}
